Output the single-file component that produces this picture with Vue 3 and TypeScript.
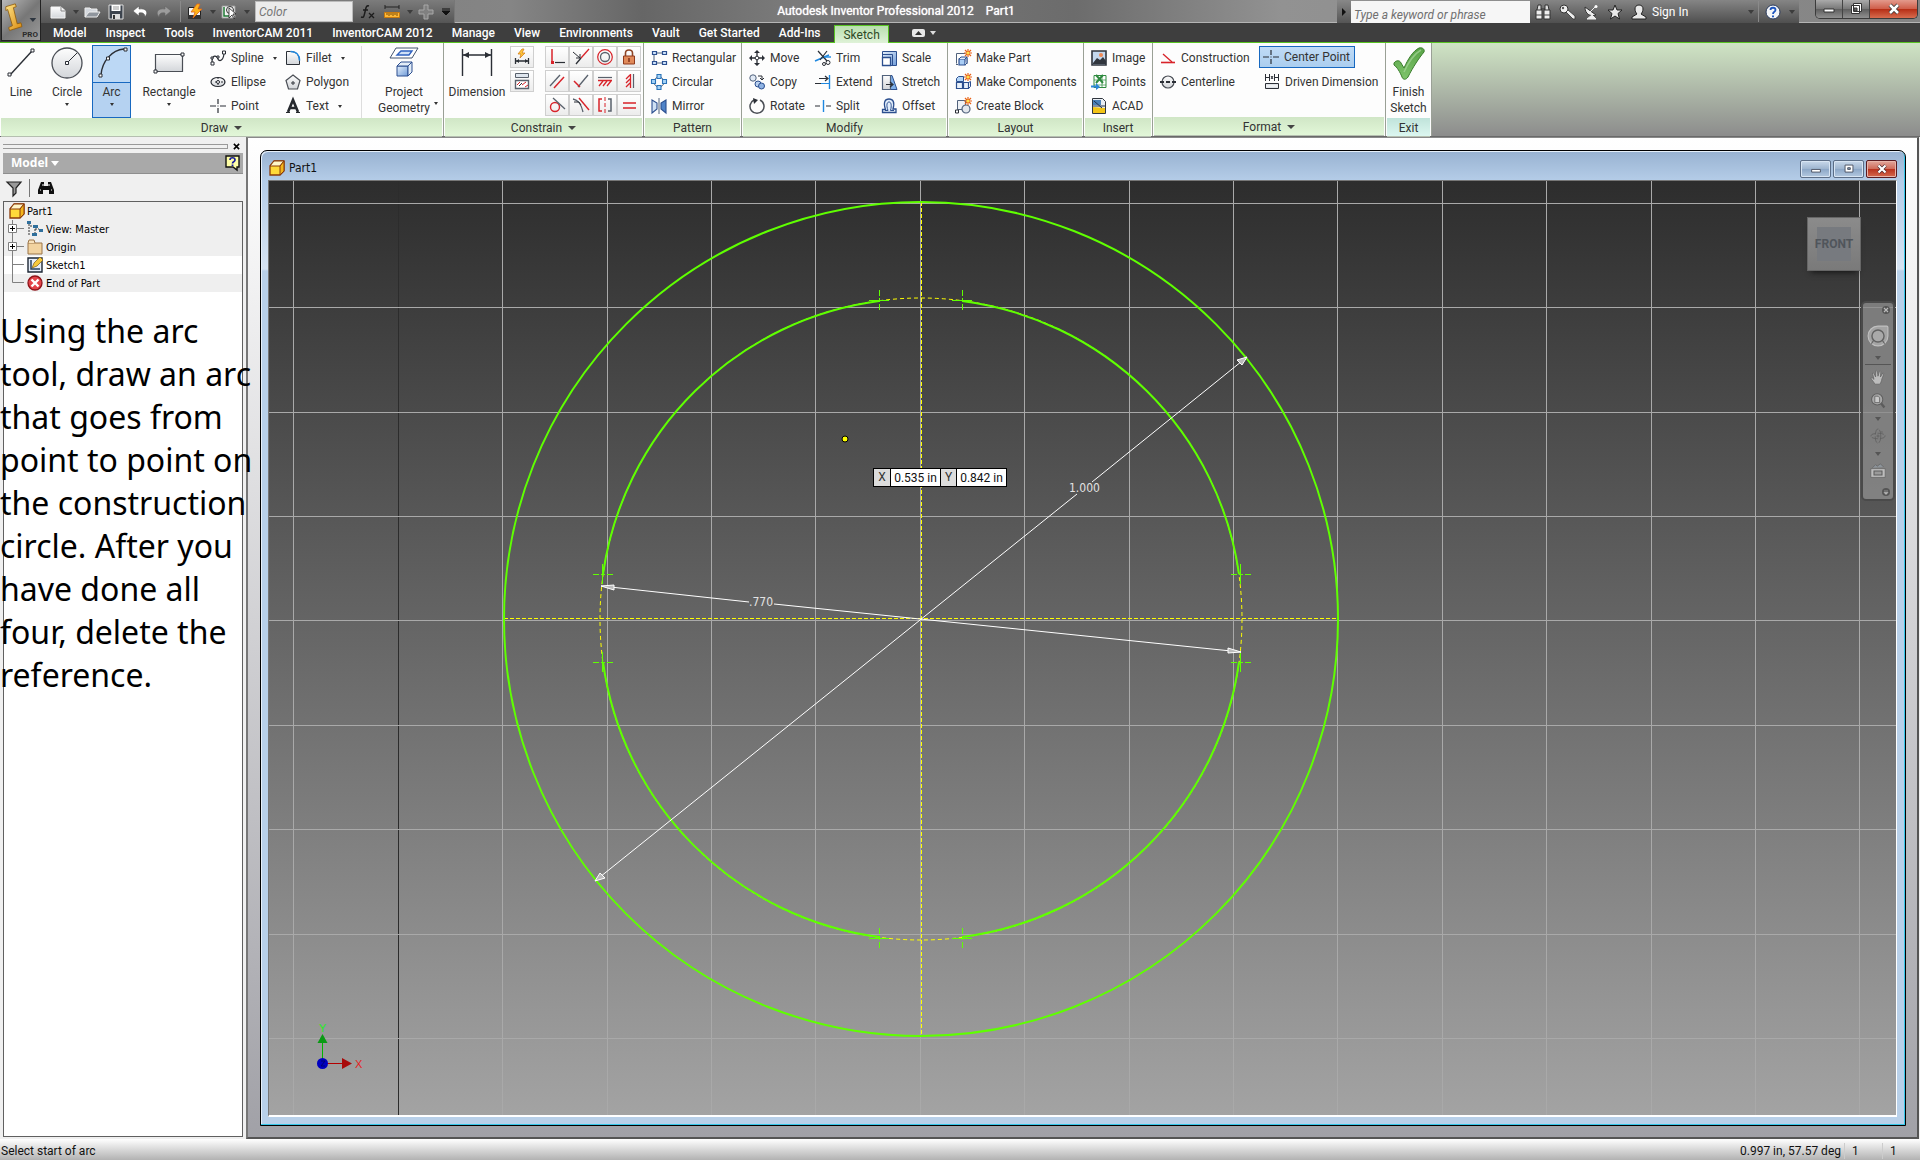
<script setup lang="ts">
import { ref } from 'vue'

interface Tool { label: string; icon: string; drop?: boolean; on?: boolean }

const tabs: string[] = ['Model', 'Inspect', 'Tools', 'InventorCAM 2011', 'InventorCAM 2012', 'Manage', 'View', 'Environments', 'Vault', 'Get Started', 'Add-Ins', 'Sketch']
const activeTab = ref('Sketch')
const keyword = ref('')
const xValue = ref('0.535 in')
const yValue = ref('0.842 in')

const K = '#2b2f36'
const R = '#d8232a'
const B = '#2c4f8f'
const L = '#1e88e0'
const star = '<path d="M13-1v8M9 3h8M10 0l6 6M16 0l-6 6" stroke="#e8631a" stroke-width="1.2"/><circle cx="13" cy="3" r="1.5" fill="#ffe14a"/>'

const icons: Record<string, string> = {
  // large 32px tools
  line: `<path d="M5 28L27 4" stroke="${K}" stroke-width="1.4"/><path d="M3 26h3v3H3zM26 2h3v3h-3z" fill="#fff" stroke="${K}"/>`,
  circle: `<circle cx="16" cy="16" r="15" fill="url(#gLight)" stroke="#4a4e55" stroke-width="1.3"/><path d="M16 16L26 6" stroke="${K}"/><path d="M14.500 14.500h3v3h-3z" fill="#fff" stroke="${K}"/>`,
  arc: `<path d="M5 28C6 14 16 3 28 2" fill="none" stroke="${K}" stroke-width="1.4"/><path d="M3 27h3v3H3zM10.500 10h3v3h-3zM28 1h3v3h-3z" fill="#fff" stroke="${K}"/>`,
  rect: `<path d="M2.500 7.500h27v17h-27z" fill="url(#gLight)" stroke="#4a4e55" stroke-width="1.2"/><path d="M1 23h3v3H1zM28 6h3v3h-3z" fill="#fff" stroke="${K}"/>`,
  project: `<path d="M8 1h22l-6 10H2z" fill="#fff" stroke="#44556f"/><path d="M13 4h11l-3 4H9z" fill="#cfe0f7" stroke="#2f62c0" stroke-width="1.4"/><path d="M9 19h11v10H9z" fill="url(#gBlue)" stroke="${B}"/><path d="M9 19l4-4h11l-4 4zM20 19l4-4v10l-4 4z" fill="#e3edf8" stroke="${B}"/>`,
  dimension: `<path d="M1.500 2v27M30.500 2v27M2 8h28" stroke="${K}" stroke-width="1.4"/><path d="M2 8l6-3v6zM30 8l-6-3v6z" fill="${K}"/>`,
  check: `<path d="M1 16c2-3 6-3 7 0l3 5C15 12 20 4 26 1c4-1 6 2 5 4C26 11 20 20 15 30c-2 3-5 3-6 0C7 25 4 20 1 18z" fill="url(#gGreen)" stroke="#3a7d2c"/><path d="M11 25C16 14 21 7 28 3" fill="none" stroke="#a7d59a" stroke-width="1.5" opacity=".7"/>`,
  // small 16px tools
  spline: `<path d="M2 13C2 3 7 6 8 9s6 2 6-7" fill="none" stroke="${K}" stroke-width="1.2"/><path d="M1 12h3v3H1zM12.500 1h3v3h-3zM1 7h2v2H1zM7 6h2v2H7z" fill="#fff" stroke="${K}"/>`,
  ellipse: `<ellipse cx="8" cy="8" rx="7" ry="4.500" fill="url(#gLight)" stroke="${K}" stroke-width="1.2"/><path d="M8 3v10M5 8h10" stroke="${K}" stroke-dasharray="2 1"/><circle cx="8" cy="8" r="1.500" fill="#fff" stroke="${K}"/>`,
  point: `<path d="M8 1v5M8 10v5M0 8h6M10 8h6" stroke="${K}" stroke-width="1.2"/><path d="M7.500 7.500h1v1h-1z" fill="${K}"/>`,
  fillet: `<path d="M1.500 1.500h4c6 0 9 4 9 9v4h-13z" fill="url(#gLight)" stroke="${K}"/><path d="M5.500 1.500c6 0 9 4 9 9" fill="none" stroke="${L}" stroke-width="1.600"/>`,
  polygon: `<path d="M8 1l7 5.500L12.500 15h-9L1 6.500z" fill="url(#gLight)" stroke="#4a4e55" stroke-width="1.2"/><path d="M7 8h2v2H7z" fill="#fff" stroke="${K}"/>`,
  textA: `<path d="M3 14L8 2l5 12M5 10h6" fill="none" stroke="#26292e" stroke-width="2.600"/><path d="M1 14.500h4M11 14.500h4" stroke="#26292e"/>`,
  autoDim: `<path d="M8 0L4 5h3L6 9l5-5H8l2-4z" fill="#ffc93c" stroke="#d7801a" stroke-width=".8"/><path d="M1.500 9v6M14.500 9v6M2 12h12" stroke="${K}" stroke-width="1.3"/><path d="M2 12l3-2v4zM14 12l-3-2v4z" fill="${K}"/>`,
  showCon: `<path d="M1.500.5h13v4h-13z" fill="#dfe6ee" stroke="#59616c"/><path d="M1.500 7.500h13v8h-13z" fill="#fff" stroke="#59616c" stroke-width="1.4"/><path d="M3 12l3-3M8 12l4-3M11 14l3-2" stroke="${R}"/><path d="M5 13l3-3" stroke="${K}"/>`,
  coincident: `<path d="M3 0v12" stroke="${R}" stroke-width="1.5"/><path d="M6 13.500h10" stroke="${K}" stroke-width="1.2"/><path d="M2 12h3v3H2z" fill="${R}"/>`,
  collinear: `<path d="M3 15l5-6" stroke="${K}" stroke-width="1.3"/><path d="M8 9l8-9" stroke="${R}" stroke-width="1.3"/><path d="M0 3l7 6M7 9V5M7 9H3" stroke="${K}"/>`,
  concentric: `<circle cx="8" cy="8" r="7.300" fill="none" stroke="${R}" stroke-width="1.2"/><circle cx="8" cy="8" r="4.500" fill="none" stroke="#59616c" stroke-width="1.3"/>`,
  lock: `<path d="M4.500 7V4c0-4 7-4 7 0v3" fill="none" stroke="#8f4526" stroke-width="1.600"/><path d="M2.500 7h11v8h-11z" fill="#e08a5a" stroke="#8f3a1c"/><path d="M8 9v4" stroke="#7a2c14" stroke-width="1.4"/>`,
  parallel: `<path d="M1 13L11 2" stroke="#59616c" stroke-width="1.3"/><path d="M5 15L15 4" stroke="${R}" stroke-width="1.500"/>`,
  perp: `<path d="M5 14L15 2" stroke="#59616c" stroke-width="1.3"/><path d="M1 8l6 6" stroke="${R}" stroke-width="1.500"/>`,
  horiz: `<path d="M1 4.500h14" stroke="#59616c" stroke-width="1.2"/><path d="M1 7.500h14M6 8l-4 5M10 8l-4 5M14 8l-4 5" stroke="${R}" stroke-width="1.3"/>`,
  vert: `<path d="M12.500 1v14" stroke="#59616c" stroke-width="1.2"/><path d="M9.500 1v14M9 2L5 6M9 6l-4 4M9 10l-4 4" stroke="${R}" stroke-width="1.3"/>`,
  tangent: `<circle cx="6" cy="10" r="4.500" fill="none" stroke="${R}" stroke-width="1.4"/><path d="M4 1l12 11" stroke="#59616c" stroke-width="1.3"/>`,
  smooth: `<path d="M0 2c5 1 8 4 10 13" fill="none" stroke="#59616c" stroke-width="1.3"/><path d="M6 1l10 12" stroke="${R}" stroke-width="1.4"/><path d="M1 5h5l2 3" stroke="${K}" fill="none"/>`,
  symmetric: `<path d="M5 2H2v12h3" fill="none" stroke="${R}" stroke-width="1.5"/><path d="M11 2h3v12h-3" fill="none" stroke="#59616c" stroke-width="1.5"/><path d="M8 0v16" stroke="${R}" stroke-dasharray="4 2"/>`,
  equal: `<path d="M2 6h13M2 11h13" stroke="${R}" stroke-width="1.4"/>`,
  rectPat: `<path d="M4 3h8M3 4v8M12 13H6" stroke="#51627c"/><path d="M1.500 1.500h4v3h-4zM11.500 1.500h4v3h-4zM1.500 11.500h4v3h-4zM11.500 11.500h4v3h-4z" fill="#cfe3fa" stroke="${B}" stroke-width="1.2"/>`,
  circPat: `<circle cx="8" cy="8" r="5" fill="none" stroke="#51627c"/><path d="M6 .5h4v4H6zM11.500 5.500h4v4h-4zM.5 5.500h4v4h-4zM6 11.500h4v4H6z" fill="#a6d3f7" stroke="#2a73b8" stroke-width="1.1"/>`,
  mirror: `<path d="M1 2l5 3v6l-5 4z" fill="#cfe0f4" stroke="${B}" stroke-width="1.1"/><path d="M15 2l-5 3v6l5 4z" fill="#4f83c8" stroke="${B}" stroke-width="1.1"/><path d="M8 0v16" stroke="#51627c"/>`,
  move: `<path d="M8 0l3 3H5zM8 16l3-3H5zM0 8l3-3v6zM16 8l-3-3v6z" fill="${K}"/><path d="M8 3v3M8 10v3M3 8h3M10 8h3" stroke="${K}" stroke-width="1.300"/><circle cx="8" cy="8" r="1.800" fill="#fff" stroke="${K}"/>`,
  copy: `<circle cx="4" cy="4" r="3.200" fill="#e2eaf5" stroke="#51627c"/><circle cx="9" cy="10" r="3" fill="#b9d0ee" stroke="${B}"/><circle cx="12.500" cy="12" r="3" fill="#8fb3e4" stroke="${B}"/><path d="M9 2h4v4M11 4l2 2 2-2" fill="none" stroke="${K}"/>`,
  rotate: `<path d="M11 2a7 7 0 1 1-6 0" fill="none" stroke="#4a4e55" stroke-width="1.500"/><path d="M4 0l5 2-4 4z" fill="${K}"/>`,
  trim: `<path d="M0 11L14 5" stroke="${L}" stroke-width="1.5"/><path d="M3 1l9 10M12 1L5 10" stroke="${K}" stroke-width="1.2"/><circle cx="13" cy="12.500" r="2" fill="none" stroke="${K}"/><circle cx="9" cy="14" r="1.500" fill="none" stroke="${K}"/><path d="M9 7h7" stroke="${L}" stroke-width="1.4"/>`,
  extend: `<path d="M14.500 1v14" stroke="${L}" stroke-width="1.400"/><path d="M4 4.500h8M10 2l3 2.500L10 7" stroke="${K}" fill="none" stroke-width="1.2"/><path d="M0 9.500h6" stroke="${K}"/><path d="M6 9.500h8" stroke="${L}"/>`,
  split: `<path d="M0 8h5M11 8h5" stroke="${K}" stroke-width="1.200"/><path d="M8.500 2v12" stroke="${L}" stroke-width="1.400"/>`,
  scale: `<path d="M1.500 1.500h14v14h-14z" fill="url(#gBlue)" stroke="${B}"/><path d="M1.500 7.500h8v8h-8z" fill="#fff" stroke="${B}" stroke-width="1.3"/><path d="M1.500 4.500h10v11" fill="none" stroke="${B}"/>`,
  stretch: `<path d="M9 1.500h2l5 14H9z" fill="#7fb0ea" stroke="${B}"/><path d="M1.500 1.500h8v14h-8z" fill="url(#gLight)" stroke="#51627c" stroke-width="1.2"/><path d="M5 10.500h6M9 8l3 2.500L9 13" stroke="${K}" fill="none" stroke-width="1.2"/>`,
  offset: `<path d="M1.500 14.500v-3h3C2 4 4 1 8 1s6 3 4 10h3v3.500z" fill="#e4effb" stroke="${B}" stroke-width="1.3"/><path d="M4 12.500h3C5 7 6 4 8 4s3 3 1.500 8.500H13" fill="none" stroke="${B}"/>`,
  makePart: `<path d="M1.500 3.500h9M1.500 3.500v10M3 14.500h-2M12 8v6" stroke="#51627c" fill="none"/><path d="M4 9h6v6H4z" fill="#a9cdf5" stroke="${B}" stroke-width="1.2"/><path d="M4 9l2-2h6l-2 2M10 15l2-2V7" fill="#e3edf8" stroke="${B}"/>${star}`,
  makeComp: `<path d="M1.500 4.500l2-2h5v5h-7z" fill="#b4d6f8" stroke="${B}"/><path d="M1.500 8.500h6v6h-6zM8.500 8.500h5v6h-5z" fill="#e9f1fa" stroke="${B}" stroke-width="1.2"/><path d="M13.500 8.500l2-1v5l-2 2" fill="none" stroke="${B}"/>${star}`,
  makeBlock: `<path d="M2.500 2.500h8v9h-8z" fill="#eef1f5" stroke="#51627c"/><circle cx="11" cy="11" r="4" fill="#e3e7ec" stroke="#51627c" stroke-width="1.2"/><path d="M.5 12h3v3h-3z" fill="#fff" stroke="${K}"/>${star}`,
  image: `<path d="M1 1h14v14H1z" fill="#c4d8ee" stroke="#30353d" stroke-width="1.600"/><path d="M2 13l4-5 3 2 3-3 3 4v3H2z" fill="#30353d"/><circle cx="10" cy="5" r="2" fill="#f08a55"/>`,
  points: `<path d="M3 1.500h12v12H3z" fill="#fff" stroke="#2f8a3f"/><path d="M5 1l7 8M12 1L5 9" stroke="#2f8a3f" stroke-width="2"/><path d="M3 6h12M3 11h12M11 1v13" stroke="#2f8a3f" stroke-width=".7"/><path d="M0 11.500h5V9l4 4-4 3v-2.500H0z" fill="#2c86d8"/>`,
  acad: `<path d="M1.500.5h10l3 3v12h-13z" fill="#e9eef4" stroke="#30353d"/><path d="M2 2h8v5H2z" fill="#4a80b8"/><path d="M2 9l12 1v5H2z" fill="#f2c416"/><path d="M3 3l8 7M2 8h12" stroke="#20314c"/>`,
  construction: `<path d="M1 12.500h14" stroke="${R}" stroke-width="1.600"/><path d="M3 4l9 8" stroke="${R}" stroke-width="1.300"/>`,
  centerline: `<circle cx="8" cy="8" r="6" fill="url(#gLight)" stroke="#4a4e55" stroke-width="1.200"/><path d="M0 8h4M6 8h4M12 8h4" stroke="${K}" stroke-width="2"/>`,
  driven: `<path d="M1.500 0v7M5.500 0v7M10.500 0v7M14.500 0v7M2 3.500h3M11 3.500h3M7 2l2 3M9 2L7 5" stroke="${K}"/><path d="M1.500 9.500h13v5h-13z" fill="#dfe3e8" stroke="${K}"/><path d="M2 12h12" stroke="#fff"/>`,
  // quick access
  file: '<path d="M1 3h10l4 3.500V14H1z" fill="url(#gLight)" stroke="#f4f4f4"/><path d="M11 3v4h4" fill="none" stroke="#888"/>',
  open: '<path d="M1 13V4h5l1 1h6v3" fill="#d4d8de" stroke="#eee"/><path d="M1 13l4-5h11l-3 5z" fill="#8f959d" stroke="#eee"/>',
  save: '<path d="M1 1h14v14H1z" fill="#3d444e" stroke="#ddd"/><path d="M3.500 1h9v6h-9z" fill="#fff"/><path d="M4 10h8v5H4z" fill="#ddd"/><path d="M5 11h2v4H5z" fill="#333"/><path d="M5 3h6M5 5h6" stroke="#999"/>',
  undo: '<path d="M7 2L1 7l6 5V9c4-1 6 1 6 4 4-5 1-9-6-8z" fill="#fff" stroke="#555" stroke-width=".6"/>',
  redo: '<path d="M9 2l6 5-6 5V9c-4-1-6 1-6 4-4-5-1-9 6-8z" fill="#9c9c9c" stroke="#666" stroke-width=".6"/>',
  update: '<path d="M1.500 3.500h9l3 3v8h-12z" fill="#f4f4f4" stroke="#222"/><path d="M1 11h13v4H1z" fill="#333"/><path d="M10 0L4 8h4l-2 6 9-9h-4l2-5z" fill="#ffb31a" stroke="#e0661a" stroke-width=".8"/>',
  pick: '<path d="M1 2h13v12H1z" fill="#f4f4f4" stroke="#999"/><path d="M3 3v9h6" stroke="#1f7a34" stroke-width="1.500" fill="none"/><circle cx="9" cy="6" r="3.500" fill="none" stroke="#333"/><path d="M8 4v10l3-3 2 4 1-1-2-4h3z" fill="#fff" stroke="#222" stroke-width=".8"/>',
  ruler: '<path d="M1 3h14M1 1v4M15 1v4" stroke="#222"/><path d="M.500 8.500h15v5H.500z" fill="#ffb937" stroke="#c77a10"/><path d="M3 9v2M5 9v3M7 9v2M9 9v3M11 9v2M13 9v3" stroke="#7a4a08"/>',
  plus: '<path d="M6 1h4v5h5v4h-5v5H6v-5H1V6h5z" fill="#808080" stroke="#a8a8a8"/>',
  fx: '<path d="M9 2c-3-1-3 2-4 6s-1 6-4 5M3 6h5" fill="none" stroke="#1c1c1c" stroke-width="1.500"/><path d="M9 9l5 5M14 9l-5 5" stroke="#1c1c1c" stroke-width="1.300"/>',
  bino: '<path d="M2 6l1-5h3v5M10 6V1h3l1 5M6 5h4" fill="#ddd" stroke="#333"/><path d="M1 6h6v9H1zM9 6h6v9H9z" fill="#eee" stroke="#333"/><path d="M1 11h6M9 11h6" stroke="#444"/>',
  key: '<circle cx="5" cy="5" r="4" fill="#eee" stroke="#333"/><path d="M7 8l7 7h2v-3L9 6z" fill="#eee" stroke="#333" stroke-width=".8"/><circle cx="4" cy="4" r="1.200" fill="#555"/>',
  dish: '<path d="M2 3c0 7 5 10 11 8z" fill="#eee" stroke="#333"/><path d="M7 8l6-6M4 15h9l-4-4z" fill="#eee" stroke="#eee"/><circle cx="13" cy="2.500" r="1.500" fill="#fff"/>',
  starI: '<path d="M8 1l2 5h5l-4 3.500 1.500 5.500L8 12l-4.500 3L5 9.500 1 6h5z" fill="#e9e9e9" stroke="#222"/>',
  user: '<path d="M8 1c3 0 4 2 4 4s-1 4-2 5l5 3v2H1v-2l5-3C5 9 4 7 4 5s1-4 4-4z" fill="#e9e9e9" stroke="#222"/>',
  help: '<circle cx="8" cy="8" r="7" fill="#f3f5f8" stroke="#2a3a5c"/><path d="M5.500 6c0-3 5-3 5 0 0 2-2.500 1.500-2.500 4" fill="none" stroke="#1f56c0" stroke-width="1.800"/><path d="M7 11.500h2v1.800H7z" fill="#1f56c0"/>',
  // browser
  part: '<path d="M1 6l4-5h10v10l-4 4H1z" fill="#ffd93a" stroke="#8a3a08" stroke-width="1.300"/><path d="M1 6l4-5h10l-4 5z" fill="#fff6c8" stroke="#8a3a08"/><path d="M11 6l4-5v10l-4 4z" fill="#f2b51c" stroke="#8a3a08"/>',
  view: '<path d="M2 3v11M3 5h4M8 5v8M8 8h4" stroke="#333" stroke-dasharray="2 1"/><path d="M0 0h4v3H0zM6 4h5v3H6zM12 8h4v3h-4zM5 12h5v3H5z" fill="#2f6f9c"/>',
  folder: '<path d="M1 4h14v11H1z" fill="#f2d3a0" stroke="#9a7448"/><path d="M1 4l1-3h5l1 3" fill="#f8e2bc" stroke="#9a7448"/>',
  sketch: '<path d="M1 1h14v14H1z" fill="#e6eef9" stroke="#1d2735" stroke-width="1.400"/><path d="M4 3v9h9" stroke="#26405f" fill="none" stroke-width="1.500"/><path d="M5 11l2-5 6-6 3 3-6 6z" fill="#f7c93c" stroke="#7a5a1a" stroke-width=".7"/>',
  end: '<circle cx="8" cy="8" r="7" fill="#e3444a" stroke="#8c1218" stroke-width="1.300"/><path d="M4.500 4.500l7 7M11.500 4.500l-7 7" stroke="#fff" stroke-width="2.400"/>',
  filter: '<path d="M1 2h14l-5 6v5l-3 3V8z" fill="#999" stroke="#222" stroke-width="1.200"/>',
  find: '<path d="M3 2h3v4h4V2h3l3 8v4h-5v-4H5v4H0v-4z" fill="#111"/><path d="M2 10h1M13 10h1M5 4v2M11 4v2" stroke="#fff"/>',
  tip: '<path d="M1 1h13v11h-2v3l-4-3H1z" fill="#ffffa6" stroke="#111" stroke-width="1.400"/><path d="M5 5c0-3 5-3 5 0 0 2-2.500 1.500-2.500 3.500" fill="none" stroke="#1a1f9c" stroke-width="1.700"/><path d="M6.600 9.500h1.800v1.500H6.600z" fill="#1a1f9c"/>',
  // navigation bar
  wheel: '<path d="M10 1h8q1 0 1 1v8a9 9 0 1 1-9-9z" fill="#a4a4a4" stroke="#c0c0c0"/><circle cx="10" cy="10" r="5.500" fill="#a9a9a9" stroke="#626262" stroke-width="1.300"/><path d="M6 14l-2 3M14 14l2 3" stroke="#626262"/>',
  hand: '<path d="M6 19c-1-3-4-5-5-8 1-1 2 0 4 2L3 5c1-1 2 0 4 5V2c1-1 2 0 3 7l2-7c1-1 2 0 1 8l3-5c1 0 2 0-1 7-1 4-1 5-3 7z" fill="#bcbcbc" stroke="#666"/>',
  zoom: '<path d="M13 12l5 6" stroke="#5c5c5c" stroke-width="3"/><circle cx="9" cy="8" r="7" fill="#a9a9a9" stroke="#5f5f5f" stroke-width="1.300"/><path d="M6 4h4l2 2v6H6z" fill="#c9c9c9" stroke="#5f5f5f"/>',
  orbit: '<ellipse cx="10" cy="10" rx="9" ry="3.500" fill="none" stroke="#5f5f5f" stroke-dasharray="8 2"/><ellipse cx="10" cy="10" rx="3.500" ry="9" fill="none" stroke="#5f5f5f" stroke-dasharray="9 2"/><path d="M10 8v4M8 10h4M13 5h3" stroke="#5f5f5f"/>',
  look: '<path d="M1 7h18v11H1z" fill="#bdbdbd" stroke="#666"/><path d="M5 10h10v5H5z" fill="#9a9a9a" stroke="#5c5c5c" stroke-width="1.300"/><path d="M3 6l4-4 2 2 4-3 4 4" fill="#8d949a" stroke="#666"/>',
}

const drawA: Tool[] = [{ label: 'Spline', icon: 'spline', drop: true }, { label: 'Ellipse', icon: 'ellipse' }, { label: 'Point', icon: 'point' }]
const drawB: Tool[] = [{ label: 'Fillet', icon: 'fillet', drop: true }, { label: 'Polygon', icon: 'polygon' }, { label: 'Text', icon: 'textA', drop: true }]
const bigDraw: Tool[] = [
  { label: 'Line', icon: 'line' },
  { label: 'Circle', icon: 'circle', drop: true },
  { label: 'Arc', icon: 'arc', drop: true, on: true },
  { label: 'Rectangle', icon: 'rect', drop: true },
]
const constraints: string[] = ['coincident', 'collinear', 'concentric', 'lock', 'parallel', 'perp', 'horiz', 'vert', 'tangent', 'smooth', 'symmetric', 'equal']

const panels: { title: string; cls: string; drop?: boolean; cols: Tool[][] }[] = [
  { title: 'Pattern', cls: 'p-pattern', cols: [[{ label: 'Rectangular', icon: 'rectPat' }, { label: 'Circular', icon: 'circPat' }, { label: 'Mirror', icon: 'mirror' }]] },
  {
    title: 'Modify', cls: 'p-modify', cols: [
      [{ label: 'Move', icon: 'move' }, { label: 'Copy', icon: 'copy' }, { label: 'Rotate', icon: 'rotate' }],
      [{ label: 'Trim', icon: 'trim' }, { label: 'Extend', icon: 'extend' }, { label: 'Split', icon: 'split' }],
      [{ label: 'Scale', icon: 'scale' }, { label: 'Stretch', icon: 'stretch' }, { label: 'Offset', icon: 'offset' }],
    ],
  },
  { title: 'Layout', cls: 'p-layout', cols: [[{ label: 'Make Part', icon: 'makePart' }, { label: 'Make Components', icon: 'makeComp' }, { label: 'Create Block', icon: 'makeBlock' }]] },
  { title: 'Insert', cls: 'p-insert', cols: [[{ label: 'Image', icon: 'image' }, { label: 'Points', icon: 'points' }, { label: 'ACAD', icon: 'acad' }]] },
  {
    title: 'Format', cls: 'p-format', drop: true, cols: [
      [{ label: 'Construction', icon: 'construction' }, { label: 'Centerline', icon: 'centerline' }],
      [{ label: 'Center Point', icon: 'point', on: true }, { label: 'Driven Dimension', icon: 'driven' }],
    ],
  },
]

const tree = [
  { label: 'View: Master', icon: 'view', expand: true },
  { label: 'Origin', icon: 'folder', expand: true },
  { label: 'Sketch1', icon: 'sketch', expand: false, active: true },
  { label: 'End of Part', icon: 'end', expand: false },
]

const note: string[] = ['Using the arc', 'tool, draw an arc', 'that goes from', 'point to point on', 'the construction', 'circle. After you', 'have done all', 'four, delete the', 'reference.']

// grid spacing of the sketch plane
const STEP = 104.4
const gridX = Array.from({ length: 16 }, (_, i) => Math.floor(24.9 + i * STEP))
const gridY = Array.from({ length: 9 }, (_, i) => Math.floor(22.3 + i * STEP))

// arc end points relative to the sketch centre
const marks: { x: number; y: number; v: boolean }[] = [
  { x: -42, y: -319, v: true }, { x: 41, y: -319, v: true },
  { x: -42, y: 319, v: true }, { x: 41, y: 319, v: true },
  { x: -319, y: -45, v: false }, { x: 319, y: -45, v: false },
  { x: -319, y: 43, v: false }, { x: 319, y: 43, v: false },
]
</script>

<template>
  <div class="app">
    <svg class="defs" aria-hidden="true">
      <defs>
        <linearGradient id="gLight" x1="0" y1="0" x2="0" y2="1"><stop offset="0" stop-color="#fdfdfd" /><stop offset="1" stop-color="#d3d6da" /></linearGradient>
        <linearGradient id="gBlue" x1="0" y1="0" x2="1" y2="1"><stop offset="0" stop-color="#e6f0fb" /><stop offset="1" stop-color="#6f9bd8" /></linearGradient>
        <linearGradient id="gGreen" x1="0" y1="0" x2="0" y2="1"><stop offset="0" stop-color="#59a347" /><stop offset="1" stop-color="#7ec46b" /></linearGradient>
        <linearGradient id="gGold" x1="0" y1="0" x2="1" y2="1"><stop offset="0" stop-color="#ffe487" /><stop offset="1" stop-color="#d98a10" /></linearGradient>
      </defs>
    </svg>

    <header class="head">
      <button class="appbtn" aria-label="Application menu">
        <svg class="logo" viewBox="0 0 40 40">
          <path d="M4 6l10-3 1 3-3 1 4 17 4-1 1 4-13 4-1-3 4-2L6 9l-2 1z" fill="url(#gGold)" stroke="#8a5606" stroke-width=".8" />
          <path d="M29 18h7l-3.500 4z" fill="#2e3640" />
        </svg>
        <span class="pro">PRO</span>
      </button>
      <div class="headmain">
        <div class="titlebar">
          <div class="qat">
            <button class="q" aria-label="New"><svg class="ic" viewBox="0 0 16 16" v-html="icons.file" /></button><i class="dn" />
            <button class="q" aria-label="Open"><svg class="ic" viewBox="0 0 16 16" v-html="icons.open" /></button>
            <button class="q" aria-label="Save"><svg class="ic" viewBox="0 0 16 16" v-html="icons.save" /></button>
            <button class="q" aria-label="Undo"><svg class="ic" viewBox="0 0 16 16" v-html="icons.undo" /></button>
            <button class="q" aria-label="Redo"><svg class="ic" viewBox="0 0 16 16" v-html="icons.redo" /></button>
            <i class="qsep" />
            <button class="q" aria-label="Update"><svg class="ic" viewBox="0 0 16 16" v-html="icons.update" /></button><i class="dn" />
            <button class="q" aria-label="Select"><svg class="ic" viewBox="0 0 16 16" v-html="icons.pick" /></button><i class="dn" />
            <span class="colorbox"><select class="color" aria-label="Color"><option>Color</option></select><i class="dn big" /></span>
            <button class="q" aria-label="Parameters"><svg class="ic" viewBox="0 0 16 16" v-html="icons.fx" /></button>
            <button class="q" aria-label="Measure"><svg class="ic" viewBox="0 0 16 16" v-html="icons.ruler" /></button><i class="dn" />
            <button class="q" aria-label="Add"><svg class="ic" viewBox="0 0 16 16" v-html="icons.plus" /></button>
            <svg class="more" viewBox="0 0 8 8"><path d="M0 1h8M0 3h8L4 7z" stroke="#111" fill="#111" /></svg>
          </div>
          <h1 class="title"><span>Autodesk Inventor Professional 2012</span><span>Part1</span></h1>
          <div class="info">
            <button class="fold" aria-label="Collapse search"><i class="rt" /></button>
            <input v-model="keyword" class="search" aria-label="Search" placeholder="Type a keyword or phrase">
            <div class="infobar">
              <button class="q" aria-label="Find"><svg class="ic" viewBox="0 0 16 16" v-html="icons.bino" /></button>
              <button class="q" aria-label="Subscription"><svg class="ic" viewBox="0 0 16 16" v-html="icons.key" /></button>
              <button class="q" aria-label="Communication"><svg class="ic" viewBox="0 0 16 16" v-html="icons.dish" /></button>
              <button class="q" aria-label="Favorites"><svg class="ic" viewBox="0 0 16 16" v-html="icons.starI" /></button>
              <button class="q sign"><svg class="ic" viewBox="0 0 16 16" v-html="icons.user" />Sign In</button>
              <i class="dn" /><i class="qsep" />
              <button class="q" aria-label="Help"><svg class="ic" viewBox="0 0 16 16" v-html="icons.help" /></button><i class="dn" />
            </div>
          </div>
          <div class="wctl">
            <button aria-label="Minimize"><svg viewBox="0 0 16 16"><path d="M3 8h10v3H3z" fill="#fff" stroke="#333" /></svg></button>
            <button aria-label="Restore"><svg viewBox="0 0 16 16"><path d="M5.500 2.500h8v8h-8zM3.500 4.500h8v8h-8z" fill="#fff" stroke="#333" /><path d="M6 7h3v3H6z" fill="#666" stroke="#333" /></svg></button>
            <button class="close" aria-label="Close"><svg viewBox="0 0 16 16"><path d="M4 4l8 8M12 4l-8 8" stroke="#333" stroke-width="4" /><path d="M4 4l8 8M12 4l-8 8" stroke="#fff" stroke-width="2.500" /></svg></button>
          </div>
        </div>
        <nav class="tabs">
          <button v-for="t in tabs" :key="t" class="tab" :class="{ on: t === activeTab }" @click="activeTab = t">{{ t }}</button>
          <svg class="tabmin" viewBox="0 0 24 8"><rect x="0" y="0" width="13" height="8" rx="2" fill="#e8e8e8" /><path d="M3 6h7L6.500 2z" fill="#333" /><path d="M18 2h6l-3 4z" fill="#ddd" /></svg>
        </nav>
      </div>
    </header>

    <section class="ribbon">
      <div class="panel p-draw">
        <div class="body">
          <button v-for="b in bigDraw" :key="b.label" class="big" :class="[b.icon, { on: b.on }]">
            <svg class="bic" viewBox="0 0 32 32" v-html="icons[b.icon]" /><span>{{ b.label }}</span><i v-if="b.drop" class="dn small" />
          </button>
          <div class="col c-a">
            <button v-for="t in drawA" :key="t.label" class="tool"><svg class="ic" viewBox="0 0 16 16" v-html="icons[t.icon]" />{{ t.label }}<i v-if="t.drop" class="dn small" /></button>
          </div>
          <div class="col c-b">
            <button v-for="t in drawB" :key="t.label" class="tool"><svg class="ic" viewBox="0 0 16 16" v-html="icons[t.icon]" />{{ t.label }}<i v-if="t.drop" class="dn small" /></button>
          </div>
          <button class="big project"><svg class="bic" viewBox="0 0 32 32" v-html="icons.project" /><span>Project<br>Geometry</span><i class="dn small side" /></button>
        </div>
        <div class="cap">Draw<i class="dn dark" /></div>
      </div>
      <div class="panel p-con">
        <div class="body">
          <button class="big dim"><svg class="bic" viewBox="0 0 32 32" v-html="icons.dimension" /><span>Dimension</span></button>
          <div class="pair">
            <button class="cell" aria-label="Automatic dimensions"><svg class="ic" viewBox="0 0 16 16" v-html="icons.autoDim" /></button>
            <button class="cell" aria-label="Show constraints"><svg class="ic" viewBox="0 0 16 16" v-html="icons.showCon" /></button>
          </div>
          <div class="cells">
            <button v-for="c in constraints" :key="c" class="cell" :aria-label="c"><svg class="ic" viewBox="0 0 16 16" v-html="icons[c]" /></button>
          </div>
        </div>
        <div class="cap">Constrain<i class="dn dark" /></div>
      </div>
      <div v-for="p in panels" :key="p.title" class="panel" :class="p.cls">
        <div class="body">
          <div v-for="(c, i) in p.cols" :key="i" class="col">
            <button v-for="t in c" :key="t.label" class="tool" :class="{ on: t.on }"><svg class="ic" viewBox="0 0 16 16" v-html="icons[t.icon]" />{{ t.label }}</button>
          </div>
        </div>
        <div class="cap">{{ p.title }}<i v-if="p.drop" class="dn dark" /></div>
      </div>
      <div class="panel p-exit">
        <div class="body"><button class="big finish"><svg class="bic" viewBox="0 0 32 32" v-html="icons.check" /><span>Finish<br>Sketch</span></button></div>
        <div class="cap">Exit</div>
      </div>
    </section>

    <main class="work">
      <aside class="browser">
        <div class="grip"><i class="bars" /><button class="x" aria-label="Close browser"><svg viewBox="0 0 8 8"><path d="M1 1l6 6M7 1L1 7" stroke="#000" stroke-width="1.800" /></svg></button></div>
        <div class="bhead"><b>Model</b><i class="dn white" /><svg class="ic tip" viewBox="0 0 16 16" v-html="icons.tip" /></div>
        <div class="btools"><button aria-label="Filter"><svg class="ic" viewBox="0 0 16 16" v-html="icons.filter" /></button><i /><button aria-label="Find"><svg class="ic" viewBox="0 0 16 16" v-html="icons.find" /></button></div>
        <div class="tree">
          <div class="row root"><svg class="ic" viewBox="0 0 16 16" v-html="icons.part" /><span>Part1</span></div>
          <ul class="kids">
            <li v-for="n in tree" :key="n.label" class="row" :class="{ active: n.active }">
              <svg class="twig" viewBox="0 0 20 18">
                <path :d="n.icon === 'end' ? 'M8.500 0v8.500H20' : 'M8.500 0v18M8.500 8.500H20'" fill="none" stroke="#808080" />
                <path v-if="n.expand" d="M4.500 4.500h8v8h-8z" fill="#fff" stroke="#808080" />
                <path v-if="n.expand" d="M6 8.500h5M8.500 6v5" stroke="#000" />
              </svg>
              <svg class="ic" viewBox="0 0 16 16" v-html="icons[n.icon]" /><span>{{ n.label }}</span>
            </li>
          </ul>
        </div>
        <p class="note"><span v-for="l in note" :key="l">{{ l }}</span></p>
      </aside>

      <section class="mdi">
        <div class="win">
          <div class="wtitle">
            <svg class="ic" viewBox="0 0 16 16" v-html="icons.part" /><span>Part1</span>
            <div class="wbtns">
              <button aria-label="Minimize part"><svg viewBox="0 0 16 16"><path d="M3 8.500h10v3H3z" fill="#fff" stroke="#444a5a" /></svg></button>
              <button aria-label="Maximize part"><svg viewBox="0 0 16 16"><path d="M3.500 3.500h9v8h-9z" fill="#fff" stroke="#444a5a" /><path d="M6.500 6.500h3v2h-3z" fill="#8fa4c0" stroke="#444a5a" /></svg></button>
              <button class="red" aria-label="Close part"><svg viewBox="0 0 16 16"><path d="M4 4l8 8M12 4l-8 8" stroke="#4a2a2e" stroke-width="4" /><path d="M4 4l8 8M12 4l-8 8" stroke="#fff" stroke-width="2.500" /></svg></button>
            </div>
          </div>
          <div class="view">
            <svg class="draw" width="100%" height="100%">
              <g fill="#a9a9a9">
                <rect v-for="(x, i) in gridX" :key="'x' + i" :x="x" y="0" width="1" height="100%" :fill="i === 1 ? '#2c2c2c' : '#a9a9a9'" />
                <rect v-for="y in gridY" :key="'y' + y" x="0" :y="y" width="100%" height="1" />
              </g>
              <svg x="652" y="438" overflow="visible">
                <g fill="none">
                  <path d="M.5-417V417" stroke="#ff0" stroke-dasharray="4 2" />
                  <path d="M-417-.5H417" stroke="#ff0" stroke-dasharray="4 2" />
                  <circle cx="0" cy="0" r="321" stroke="#ff0" stroke-dasharray="4 3" />
                  <circle cx="0" cy="0" r="417" stroke="#5fff00" stroke-width="2" />
                  <path d="M-318-45A321 321 0 0 1-42-318M41-318A321 321 0 0 1 318-45M318 43A321 321 0 0 1 41 318M-42 318A321 321 0 0 1-318 43" stroke="#5fff00" stroke-width="2" />
                  <g v-for="(m, i) in marks" :key="i" stroke="#5fff00">
                    <path v-if="m.v" :d="`M${m.x + .5} ${m.y - 10}v6m0 2v4m0 2v6M${m.x - 10} ${m.y + .5}h20`" />
                    <path v-else :d="`M${m.x - 9} ${m.y + .5}h6m2 0h4m2 0h6M${m.x + .5} ${m.y - 10}v20`" />
                  </g>
                  <path d="M-326 262L156-125M171-137L326-262M-320-33L-172-17M-147-15L320 33" stroke="#fff" />
                  <path d="M-326 262l5-8 5 5zM326-262l-5 8-5-5zM-320-33l13-1v5zM320 33l-13 1v-5z" fill="#bbb" stroke="#fff" />
                </g>
                <g class="dimtext"><text x="148" y="-127">1.000</text><text x="-172" y="-13">.770</text></g>
                <circle cx="-76" cy="-180" r="3" fill="#ff0" stroke="#000" />
              </svg>
            </svg>

            <form class="coords">
              <label for="cx">X</label><input id="cx" v-model="xValue"><label for="cy">Y</label><input id="cy" v-model="yValue">
            </form>

            <div class="cube"><span>FRONT</span></div>

            <div class="navbar">
              <button class="dot" aria-label="Close navigation bar"><svg viewBox="0 0 8 8"><circle cx="4" cy="4" r="4" fill="#555" /><path d="M2 2l4 4M6 2L2 6" stroke="#bbb" stroke-width="1.200" /></svg></button>
              <button aria-label="Steering wheel"><svg class="nic wheel" viewBox="0 0 20 20" v-html="icons.wheel" /></button>
              <i class="dn nav" /><hr>
              <button aria-label="Pan"><svg class="nic" viewBox="0 0 20 20" v-html="icons.hand" /></button>
              <button aria-label="Zoom"><svg class="nic" viewBox="0 0 20 20" v-html="icons.zoom" /></button>
              <i class="dn nav" />
              <button aria-label="Orbit"><svg class="nic" viewBox="0 0 20 20" v-html="icons.orbit" /></button>
              <i class="dn nav" />
              <button aria-label="Look at"><svg class="nic" viewBox="0 0 20 20" v-html="icons.look" /></button>
              <button class="dot last" aria-label="Customize"><svg viewBox="0 0 8 8"><circle cx="4" cy="4" r="4" fill="#555" /><path d="M2 3h4M2 4.500h4L4 6.500z" stroke="#bbb" stroke-width=".6" fill="#bbb" /></svg></button>
            </div>

            <svg class="triad" viewBox="0 0 48 50">
              <path d="M6.500 40V18" stroke="#00b400" /><path d="M6.500 11l5 9h-10z" fill="#0a9a14" />
              <path d="M6 40.500h22" stroke="#b40000" /><path d="M26 35v11l10-5.500z" fill="#a80a0a" />
              <circle cx="6.500" cy="40.500" r="5.500" fill="#0000c0" /><path d="M5 38h4l-4 5h4" fill="none" stroke="#000070" />
              <text x="3" y="9" fill="#22ee22">Y</text><text x="39" y="45" fill="#e62020">X</text>
            </svg>
          </div>
        </div>
      </section>
    </main>

    <footer class="status">
      <span class="msg">Select start of arc</span>
      <span>0.997 in, 57.57 deg</span><span class="n">1</span><span class="n">1</span>
    </footer>
  </div>
</template>

<style>
html, body { margin: 0; background: #f0f0f0; }
</style>

<style scoped>
.app { display: flex; flex-direction: column; min-height: 100vh; overflow: hidden; font: 12px/16px Roboto, "Noto Sans", sans-serif; color: #333; }
.app * { box-sizing: border-box; }
.defs { position: absolute; width: 0; height: 0; }
button { margin: 0; padding: 0; border: 0; background: none; color: inherit; font: inherit; display: flex; align-items: center; justify-content: center; }
input, select { font: inherit; border: 0; border-radius: 0; margin: 0; outline: 0; }
.ic { width: 16px; height: 16px; flex: none; overflow: visible; }
.dn { flex: none; width: 0; height: 0; border: 3px solid transparent; border-top: 4px solid #3c3c3c; border-bottom: 0; }
.dn.small { border-width: 3px 2px 0; border-top-color: #333; }
.dn.dark { border-width: 4px 4px 0; border-top-color: #444; margin-left: 6px; }
.dn.white { border-width: 5px 4px 0; border-top-color: #fff; margin-left: 3px; }
.dn.big { border-width: 5px 4px 0; border-top-color: #333; }
.dn.nav { border-top-color: #555; align-self: center; margin: 4px 0 3px; }

.head { display: flex; height: 43px; background: #3e3e3e; border-bottom: 1px solid #58c322; }
.appbtn { position: relative; width: 40px; height: 41px; margin-left: 1px; background: linear-gradient(135deg, #b9b9b9, #777 50%, #9b9b9b); border: 1px solid #222; border-top: 0; }
.logo { width: 38px; height: 40px; }
.pro { position: absolute; right: 2px; bottom: 0; font-size: 8px; line-height: 10px; font-weight: 700; color: #2c2c2c; }
.headmain { flex: 1; min-width: 0; }
.titlebar { display: flex; height: 23px; background: linear-gradient(90deg, #777, #858585 25%, #666 32%, #7b7b7b 40%, #6c6c6c 55%, #929292 66%, #848484); border-bottom: 1px solid #b5b5b5; }
.qat { display: flex; align-items: center; width: 414px; height: 23px; background: linear-gradient(#7c7c7c, #555); border-right: 1px solid #777; padding-left: 9px; }
.q { width: 16px; flex: none; margin-right: 8px; }
.q + .dn { margin-left: -1px; margin-right: 5px; }
.qsep { width: 1px; height: 21px; background: #8a8a8a; margin-right: 6px; flex: none; }
.colorbox { display: flex; align-items: center; width: 98px; height: 21px; background: #ebebeb; border: 1px solid #bbb; flex: none; margin-right: 7px; }
.color { flex: 1; width: 80px; appearance: none; background: none; padding: 0 3px; font-style: italic; color: #777; }
.colorbox .dn { margin-right: 1px; }
.more { width: 8px; height: 8px; flex: none; }
.title { flex: 1; margin: 0; display: flex; gap: 12px; justify-content: center; align-items: center; font-size: 12px; font-weight: 400; color: #fff; text-shadow: 0 0 1px #fff; white-space: nowrap; }
.info { display: flex; height: 23px; width: 462px; }
.fold { width: 14px; background: linear-gradient(#888, #555); }
.rt { width: 0; height: 0; border: 4px solid transparent; border-left-color: #111; border-right: 0; }
.search { width: 179px; height: 22px; margin-top: 1px; padding: 5px 3px 0; background: #f6f6f6; font-style: italic; color: #555; }
.search::placeholder { color: #707070; opacity: 1; }
.infobar { flex: 1; display: flex; align-items: center; padding-left: 5px; background: linear-gradient(#858585, #4f4f4f); color: #fff; }
.infobar .sign { width: auto; gap: 5px; flex: 1; justify-content: flex-start; }
.infobar .dn { margin: 0 9px 0 0; }
.infobar .q + .dn { margin: 0 4px 0 0; }
.wctl { display: flex; height: 19px; margin: 0 2px 0 16px; border: 1px solid #3b3b3b; border-top: 0; border-radius: 0 0 5px 5px; overflow: hidden; }
.wctl button { width: 27px; background: linear-gradient(#aaa, #777 50%, #5d5d5d 50%, #909090); border-right: 1px solid #444; }
.wctl .close { width: 47px; border: 0; background: linear-gradient(#e39a8c, #cf5c48 50%, #b52c14 50%, #d86c4e); }
.wctl svg { width: 16px; height: 16px; }
.tabs { display: flex; height: 19px; align-items: stretch; }
.tab { padding: 0 10px 0 9px; color: #fff; font-weight: 500; white-space: nowrap; }
.tabs .tab:first-child { margin-left: 3px; }
.tab.on { padding: 0 8px; margin: 2px 0 0 4px; height: 18px; color: #2e4a26; font-weight: 400; background: linear-gradient(#b9dfae, #dff2d8); border: 1px solid #58c322; border-bottom: 0; }
.tabmin { width: 24px; height: 8px; margin: 6px 0 0 23px; }

.ribbon { display: flex; height: 94px; background: linear-gradient(#cfe4c4, #8c8c8c); border-bottom: 1px solid #6a6a6a; }
.panel { flex: none; display: flex; flex-direction: column; border-right: 1px solid #9aa096; background: #fdfdfd; }
.body { position: relative; display: flex; height: 75px; padding-top: 3px; align-items: flex-start; }
.cap { flex: 1; display: flex; align-items: center; justify-content: center; background: linear-gradient(#d0e6c6, #e2f7d8); margin: 0 1px; padding-top: 2px; border-bottom: 1px solid #b5bfb0; }
.p-draw { width: 444px; } .p-con { width: 200px; } .p-pattern { width: 98px; } .p-modify { width: 206px; }
.p-layout { width: 136px; } .p-insert { width: 69px; } .p-format { width: 233px; } .p-exit { width: 46px; }
.p-exit .cap { background: linear-gradient(#c0e3da, #dcf7f0); }
.big { flex-direction: column; justify-content: flex-start; width: 45px; height: 72px; padding-top: 1px; white-space: nowrap; }
.big .bic { width: 32px; height: 32px; overflow: visible; }
.big span { margin-top: 5px; text-align: center; }
.big .small { margin-top: 3px; }
.big.line { width: 42px; }
.big.circle { width: 50px; }
.big.arc { width: 39px; height: 73px; margin-top: -1px; padding-top: 1px; border: 1px solid #1768c0; background: linear-gradient(#bcd8f5 0 36px, #1768c0 36px 37px, #b5d2f1 37px); }
.big.rect { width: 76px; }
.big.project { width: 82px; margin-left: 2px; padding-left: 3px; border-left: 1px solid #ddd; position: relative; }
.side { position: absolute; right: 5px; top: 53px; }
.big.dim { width: 66px; }
.col { display: flex; flex-direction: column; align-items: flex-start; }
.tool { height: 24px; gap: 5px; white-space: nowrap; border: 1px solid transparent; padding-right: 3px; }
.tool .dn { margin-left: 4px; }
.tool.on { height: 22px; margin: 0 0 1px -4px; padding: 0 4px 0 3px; border-color: #1768c0; background: linear-gradient(#c0dbf6, #abceef); }
.tool.on + .tool { margin-top: 1px; }
.c-a { width: 75px; margin-left: 2px; } .c-b { width: 75px; }
.pair { width: 35px; display: grid; gap: 2px; justify-content: start; }
.cells { display: grid; grid-template-columns: repeat(4, 24px); row-gap: 2px; }
.cell { width: 24px; height: 22px; border: 1px solid #cfcfcf; background: linear-gradient(#fff, #ececec); }
.p-pattern .col { margin-left: 6px; }
.p-modify .col { width: 66px; } .p-modify .col:first-child { margin-left: 6px; }
.p-layout .col, .p-insert .col, .p-format .col:first-child { margin-left: 6px; }
.p-format .col:first-child { width: 104px; }
.big.finish { width: 45px; }

.work { flex: 1; display: flex; background: #f0f0f0; }
.browser { position: relative; flex: none; width: 246px; display: flex; flex-direction: column; padding: 3px 3px 2px; font: 11px/18px "DejaVu Sans Condensed", "DejaVu Sans", sans-serif; color: #000; }
.grip { display: flex; height: 12px; align-items: center; margin-bottom: 1px; }
.bars { width: 225px; height: 5px; border: 1px solid #999; border-left: 0; border-width: 1px 1px 1px 0; margin-right: 5px; }
.x svg { width: 7px; height: 7px; }
.bhead { display: flex; align-items: center; height: 21px; background: #a9a9a9; padding: 0 2px 0 8px; color: #fff; border-bottom: 1px solid #8e8e8e; }
.bhead b { font: 700 12px/18px "Noto Sans", sans-serif; }
.tip { margin-left: auto; }
.btools { display: flex; align-items: center; height: 27px; padding: 0 3px; }
.btools i { width: 1px; height: 18px; background: #777; margin: 0 8px 0 7px; }
.tree { flex: 1; border: 1px solid #606060; background: #fff; }
.kids { list-style: none; margin: 0; padding: 0; }
.row { display: flex; align-items: center; gap: 3px; height: 18px; background: #efefef; }
.row span { padding-top: 1px; }
.row.root { padding-left: 5px; gap: 2px; }
.row.active { background: #fff; }
.twig { width: 20px; height: 18px; }
.note { position: absolute; left: 0; top: 172px; margin: 0; z-index: 3; font: 32px/43px "Noto Sans", sans-serif; color: #000; white-space: nowrap; }
.note span { display: block; }

.mdi { flex: 1; min-width: 0; display: flex; margin-right: 1px; padding: 12px 11px 11px 12px; border: 2px solid #7a7a7a; border-width: 1px 2px 2px; border-color: #8a8a8a #555 #555 #777; background: linear-gradient(#fff, #a1a1a7); }
.win { flex: 1; min-width: 0; display: flex; flex-direction: column; border: 1px solid #000; border-radius: 7px 7px 0 0; box-shadow: inset -1px -1px #35c6e8, inset 1px 1px #e6f0fa; padding: 1px 8px 8px 7px; background: linear-gradient(#98b2d1, #b5cde8 30px, #d6e3f2 118px, #b8d0e9 120px); }
.wtitle { display: flex; align-items: center; height: 28px; gap: 4px; padding: 4px 0 0 1px; color: #111; font: 12px/16px "DejaVu Sans Condensed", Roboto, sans-serif; }
.wbtns { display: flex; gap: 2px; margin-left: auto; margin-top: 1px; }
.wbtns button { width: 31px; height: 18px; border: 1px solid #5b6d86; border-radius: 2px; background: linear-gradient(#c9d9eb, #9db4cf 50%, #8ba6c6 50%, #b4c9e0); box-shadow: inset 0 0 0 1px #d8e5f3; }
.wbtns .red { border-color: #5a1a20; background: linear-gradient(#e2a79c, #cf6a58 50%, #b8301c 50%, #d4694e); box-shadow: inset 0 0 0 1px #e8b5aa; }
.wbtns svg { width: 14px; height: 14px; }
.view { position: relative; flex: 1; overflow: hidden; border: 1px solid #777; border-right-color: #fff; border-bottom: 2px solid #fff; background: linear-gradient(#2d2d2d, #a3a3a3); }
.draw { position: absolute; inset: 0; }
.dimtext { font: 12px "DejaVu Sans Condensed", "DejaVu Sans", sans-serif; fill: #e2e2e2; }
.coords { position: absolute; left: 604px; top: 287px; display: flex; height: 19px; border: 1px solid #000; background: #fff; color: #111; }
.coords label { width: 17px; background: #dcdcdc; text-align: center; line-height: 17px; border-right: 1px solid #000; color: #333; }
.coords label + input + label { border-left: 1px solid #000; }
.coords input { width: 49px; padding: 0; text-align: center; color: #111; background: #fff; }
.cube { position: absolute; right: 35px; top: 36px; width: 54px; height: 54px; display: flex; align-items: center; justify-content: center; background: linear-gradient(#8b8b8b, #7a7a7a); border: 1px solid #666; box-shadow: 0 5px 6px -4px #111; }
.cube span { width: 34px; height: 34px; background: #777a7f; font: 700 12px/34px Roboto, sans-serif; color: #50555b; display: flex; justify-content: center; }
.navbar { position: absolute; right: 1px; top: 120px; width: 34px; height: 200px; display: flex; flex-direction: column; align-items: center; background: rgba(140, 140, 140, .8); border: 2px solid #4a4a4a; border-radius: 5px; }
.navbar hr { width: 26px; height: 1px; margin: 1px 0 0; border: 0; background: #555; }
.navbar .dot { align-self: flex-end; margin: 3px 3px 0 0; }
.dot svg { width: 8px; height: 8px; }
.navbar .dot.last { margin: auto 3px 3px 0; }
.nic { width: 16px; height: 16px; margin: 4px 0; }
.nic.wheel { width: 22px; height: 22px; margin: 11px 0 5px; }
.triad { position: absolute; left: 47px; top: 842px; width: 48px; height: 50px; font: 11px "Liberation Sans", sans-serif; }

.status { display: flex; align-items: center; height: 21px; padding: 2px 0 0 1px; background: linear-gradient(#fff, #b2b2b2); color: #111; }
.msg { flex: 1; }
.n { width: 38px; padding-left: 7px; border-left: 1px solid #ccc; }
.msg + span { margin-right: 3px; }
</style>
